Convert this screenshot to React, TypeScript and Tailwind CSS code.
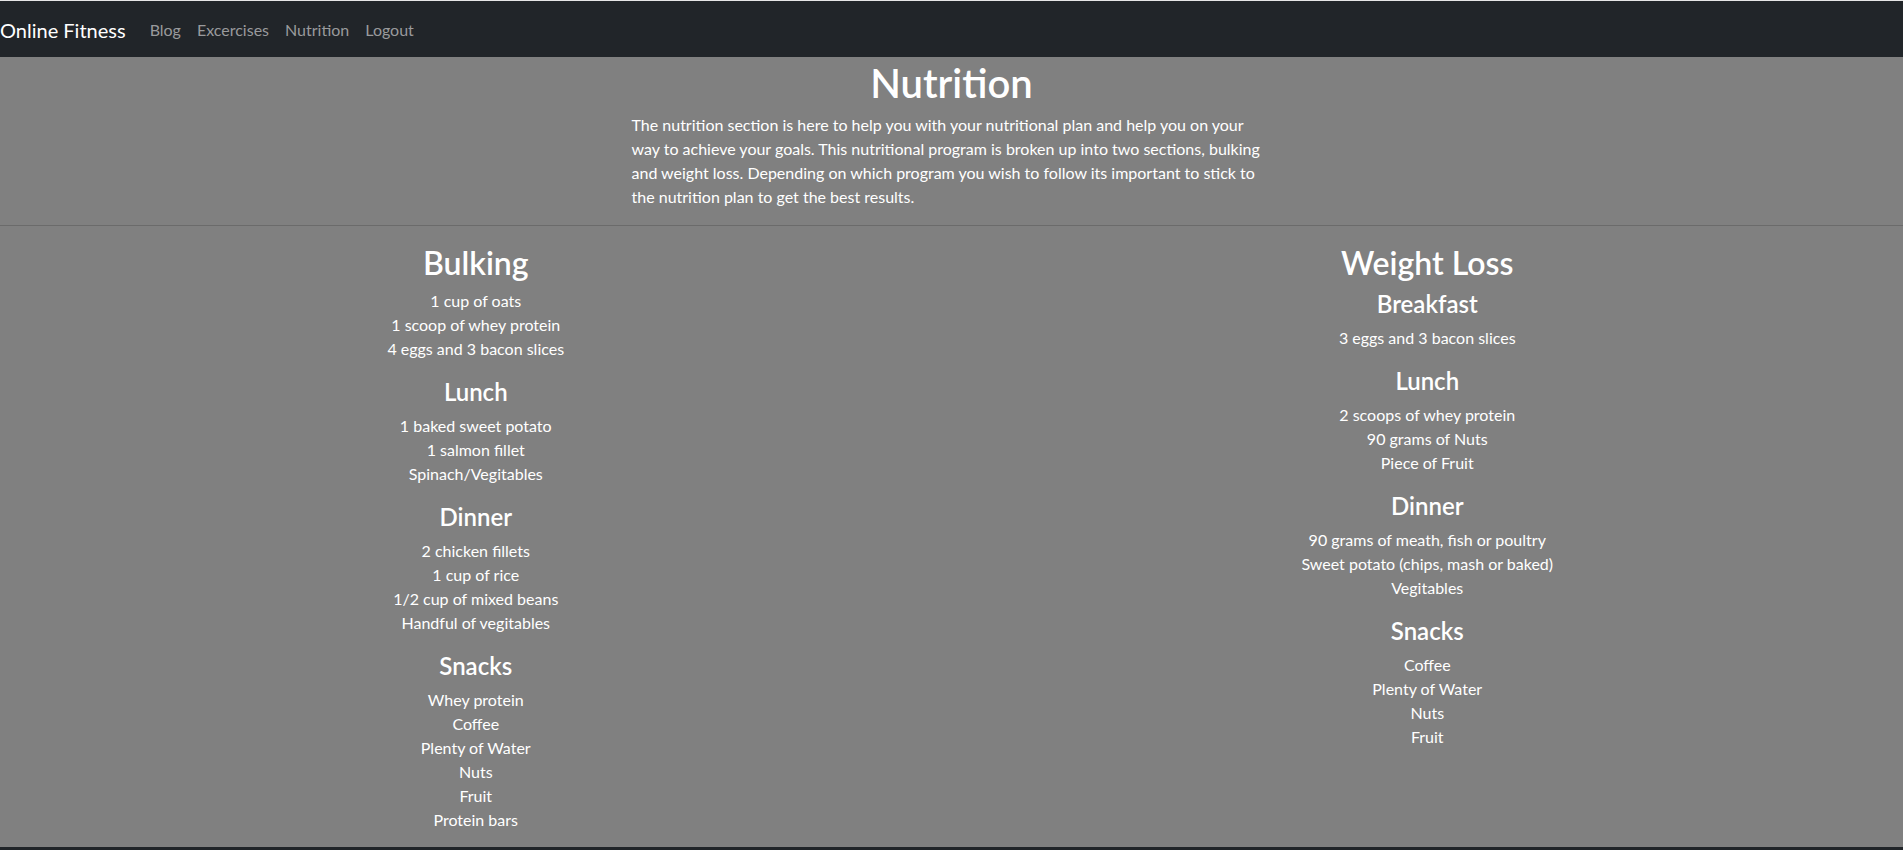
import React from "react";

const font = { fontFamily: '"Segoe UI", Lato, "Open Sans", sans-serif' };

type Section = { title?: string; items: string[] };

const bulking: Section[] = [
  { items: ["1 cup of oats", "1 scoop of whey protein", "4 eggs and 3 bacon slices"] },
  { title: "Lunch", items: ["1 baked sweet potato", "1 salmon fillet", "Spinach/Vegitables"] },
  { title: "Dinner", items: ["2 chicken fillets", "1 cup of rice", "1/2 cup of mixed beans", "Handful of vegitables"] },
  { title: "Snacks", items: ["Whey protein", "Coffee", "Plenty of Water", "Nuts", "Fruit", "Protein bars"] },
];

const weightLoss: Section[] = [
  { title: "Breakfast", items: ["3 eggs and 3 bacon slices"] },
  { title: "Lunch", items: ["2 scoops of whey protein", "90 grams of Nuts", "Piece of Fruit"] },
  { title: "Dinner", items: ["90 grams of meath, fish or poultry", "Sweet potato (chips, mash or baked)", "Vegitables"] },
  { title: "Snacks", items: ["Coffee", "Plenty of Water", "Nuts", "Fruit"] },
];

function Column({ heading, sections }: { heading: string; sections: Section[] }) {
  return (
    <div className="flex-1 text-center">
      <h2 className="text-[32px] leading-[1.2] font-semibold pt-[2px] mb-[6px]">{heading}</h2>
      {sections.map((s, i) => (
        <div key={i}>
          {s.title ? (
            <h4 className="text-[24px] leading-[1.2] font-semibold pt-[2px] mb-[7px]">{s.title}</h4>
          ) : null}
          <ul className={s.title ? "mb-[15px] text-[16px] leading-6" : "pt-px mb-[15px] text-[16px] leading-6"}>
            {s.items.map((it) => (
              <li key={it}>{it}</li>
            ))}
          </ul>
        </div>
      ))}
    </div>
  );
}

export default function App() {
  return (
    <div className="min-h-screen bg-[#808080] text-white" style={font}>
      <div className="h-px bg-[#e6e6e6]" />
      <nav className="bg-[#212529] h-14 flex items-center pt-[2px]">
        <span className="text-[20px] leading-[30px] text-white mr-4">Online Fitness</span>
        <div className="flex text-[16px] leading-6 text-[#999a9c]">
          <span className="px-2">Blog</span>
          <span className="px-2">Excercises</span>
          <span className="px-2">Nutrition</span>
          <span className="px-2">Logout</span>
        </div>
      </nav>
      <h1 className="text-[40px] leading-[1.2] font-semibold text-center pt-[2px] mb-[6px]">Nutrition</h1>
      <p className="w-[640px] mx-auto text-[16px] leading-6 mb-4">
        The nutrition section is here to help you with your nutritional plan and help you on your way to achieve your goals. This nutritional program is broken up into two sections, bulking and weight loss. Depending on which program you wish to follow its important to stick to the nutrition plan to get the best results.
      </p>
      <hr className="border-t border-[#6b6b6b] mb-4" />
      <div className="flex">
        <Column heading="Bulking" sections={bulking} />
        <Column heading="Weight Loss" sections={weightLoss} />
      </div>
      <div className="h-14 bg-[#212529]" />
    </div>
  );
}
